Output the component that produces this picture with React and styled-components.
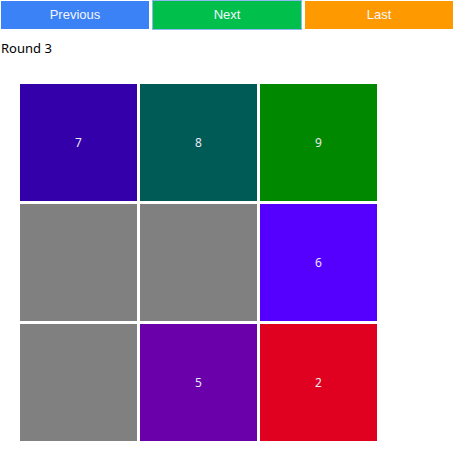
import styled, { createGlobalStyle } from 'styled-components'

const GlobalStyle = createGlobalStyle`
  body {
    margin: 0;
    background: #fff;
    font-family: "Noto Sans", sans-serif;
  }
`

const cells = [
  { value: 7, color: '#3300aa' },
  { value: 8, color: '#005a55' },
  { value: 9, color: '#008800' },
  { value: null, color: '#808080' },
  { value: null, color: '#808080' },
  { value: 6, color: '#5500ff' },
  { value: null, color: '#808080' },
  { value: 5, color: '#6a00aa' },
  { value: 2, color: '#e00020' }
]

export default function App () {
  return (
    <Page>
      <GlobalStyle />
      <Toolbar>
        <NavButton $bg='#3b82f6'>Previous</NavButton>
        <NavButton $bg='#00c04b' $focused>Next</NavButton>
        <NavButton $bg='#ff9900'>Last</NavButton>
      </Toolbar>
      <RoundLabel>Round 3</RoundLabel>
      <Board>
        {cells.map((cell, i) => (
          <Cell key={i} $bg={cell.color}>{cell.value}</Cell>
        ))}
      </Board>
    </Page>
  )
}

const Page = styled.div`
  width: 461px;
`

const Toolbar = styled.div`
  display: flex;
  gap: 3px;
  padding: 1px 0 0 1px;
`

const NavButton = styled.button`
  width: ${p => p.$focused ? '150px' : '148px'};
  height: ${p => p.$focused ? '30px' : '28px'};
  margin-top: ${p => p.$focused ? '-1px' : '0'};
  border: ${p => p.$focused ? '1px solid #8fb8f0' : 'none'};
  padding: 0 0 1px;
  background: ${p => p.$bg};
  color: #f4f6ff;
  font-family: "Liberation Sans", Arial, sans-serif;
  font-size: 13px;
  cursor: pointer;
`

const RoundLabel = styled.p`
  margin: 9px 0 0 1px;
  font-size: 13px;
  line-height: 18px;
  color: #000;
`

const Board = styled.div`
  display: grid;
  grid-template-columns: repeat(3, 117px);
  grid-auto-rows: 117px;
  gap: 3px;
  margin: 27px 0 0 20px;
`

const Cell = styled.div`
  background: ${p => p.$bg};
  display: flex;
  align-items: center;
  justify-content: center;
  color: #e8e8f4;
  font-size: 12px;
`
